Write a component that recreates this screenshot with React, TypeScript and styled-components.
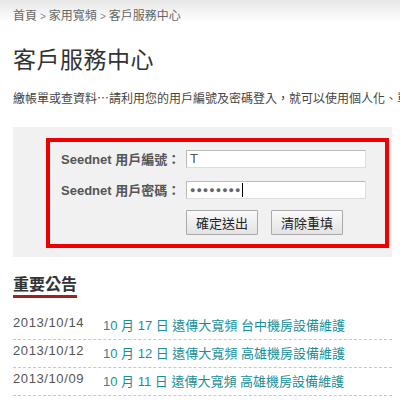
import React from "react";
import styled, { createGlobalStyle } from "styled-components";

const Global = createGlobalStyle`
  html, body { margin: 0; padding: 0; background: #fff; overflow: hidden; }
  body { font-family: "Liberation Sans", "Noto Sans CJK TC", sans-serif; }
`;

const Page = styled.div`
  width: 400px;
  height: 400px;
  overflow: hidden;
  background: linear-gradient(to bottom, #e6e6e6 0px, #ffffff 22px);
`;

const Inner = styled.div`
  padding: 0 0 0 13px;
  width: 379px;
`;

const Crumbs = styled.div`
  padding-top: 8px;
  height: 16px;
  line-height: 16px;
  font-size: 12px;
  color: #666;
  white-space: nowrap;
`;

const Sep = styled.span`
  color: #888;
  font-size: 10px;
  margin: 0 3px;
`;

const Title = styled.h1`
  margin: 21px 0 0;
  font-size: 23px;
  line-height: 30px;
  font-weight: normal;
  color: #333;
  letter-spacing: 0.5px;
`;

const Desc = styled.p`
  margin: 13px 0 0;
  font-family: "Noto Sans CJK TC", sans-serif;
  font-size: 12px;
  line-height: 20px;
  color: #444;
  white-space: nowrap;
  overflow: hidden;
  width: 387px;
`;

const Panel = styled.div`
  margin-top: 19px;
  width: 379px;
  height: 130px;
  box-sizing: border-box;
  background: #f1f1f1;
  padding: 11px 0 0 33px;
`;

const RedBox = styled.form`
  width: 343px;
  height: 110px;
  box-sizing: border-box;
  border: 4px solid #ee0000;
  padding: 8px 0 0 11px;
  display: flex;
  flex-direction: column;
  gap: 14px;
`;

const Row = styled.div`
  display: flex;
  align-items: center;
  height: 17px;
`;

const Label = styled.label`
  width: 125px;
  font-size: 13px;
  font-weight: bold;
  color: #555;
  white-space: nowrap;
`;

const Input = styled.div<{ $dots?: boolean }>`
  width: 180px;
  height: 18px;
  box-sizing: border-box;
  background: #fff;
  border: 1px solid #bbb;
  border-bottom-color: #ddd;
  border-right-color: #ddd;
  font-size: ${(p) => (p.$dots ? "9px" : "13px")};
  line-height: 16px;
  color: ${(p) => (p.$dots ? "#666" : "#555")};
  padding-left: 3px;
  display: flex;
  align-items: center;
  letter-spacing: ${(p) => (p.$dots ? "1px" : "0")};
`;

const Caret = styled.span`
  display: inline-block;
  width: 1px;
  height: 14px;
  background: #000;
`;

const Buttons = styled.div`
  display: flex;
  gap: 13px;
  padding-left: 125px;
  margin-top: -2px;
`;

const Button = styled.button`
  width: 72px;
  height: 25px;
  box-sizing: border-box;
  border: 1px solid #aaa;
  background: linear-gradient(to bottom, #fafafa, #e3e3e3);
  font-family: "Noto Sans CJK TC", sans-serif;
  font-size: 13px;
  color: #222;
  padding: 0;
  border-radius: 1px;
`;

const Heading = styled.h2`
  margin: 19px 0 0;
  display: inline-block;
  font-size: 16px;
  line-height: 18px;
  font-weight: bold;
  color: #333;
  padding-bottom: 1px;
  border-bottom: 3px solid #a51f1f;
`;

const List = styled.ul`
  list-style: none;
  margin: 14px 0 0;
  padding: 0;
`;

const Item = styled.li`
  display: flex;
  align-items: flex-start;
  height: 26px;
  border-bottom: 1px dashed #c8c8c8;
  padding-top: 1px;
`;

const Date = styled.span`
  width: 90px;
  font-size: 13px;
  line-height: 20px;
  color: #555;
  letter-spacing: 0.6px;
`;

const Link = styled.a`
  font-size: 13px;
  line-height: 20px;
  color: #188f9a;
  text-decoration: none;
  margin-top: 3px;
  white-space: nowrap;
`;

const news = [
  { date: "2013/10/14", text: "10 月 17 日 遠傳大寬頻 台中機房設備維護" },
  { date: "2013/10/12", text: "10 月 12 日 遠傳大寬頻 高雄機房設備維護" },
  { date: "2013/10/09", text: "10 月 11 日 遠傳大寬頻 高雄機房設備維護" },
  { date: "2013/10/07", text: "10 月 09 日 遠傳大寬頻 台北機房設備維護" },
];

export default function App() {
  return (
    <Page>
      <Global />
      <Inner>
        <Crumbs>
          首頁<Sep>&gt;</Sep>家用寬頻<Sep>&gt;</Sep>客戶服務中心
        </Crumbs>
        <Title>客戶服務中心</Title>
        <Desc>繳帳單或查資料…請利用您的用戶編號及密碼登入，就可以使用個人化、單一帳號服務</Desc>
        <Panel>
          <RedBox>
            <Row>
              <Label>Seednet 用戶編號：</Label>
              <Input>T</Input>
            </Row>
            <Row>
              <Label>Seednet 用戶密碼：</Label>
              <Input $dots>
                ●●●●●●●●<Caret />
              </Input>
            </Row>
            <Buttons>
              <Button type="button">確定送出</Button>
              <Button type="button">清除重填</Button>
            </Buttons>
          </RedBox>
        </Panel>
        <Heading>重要公告</Heading>
        <List>
          {news.map((n) => (
            <Item key={n.date}>
              <Date>{n.date}</Date>
              <Link href="#">{n.text}</Link>
            </Item>
          ))}
        </List>
      </Inner>
    </Page>
  );
}
